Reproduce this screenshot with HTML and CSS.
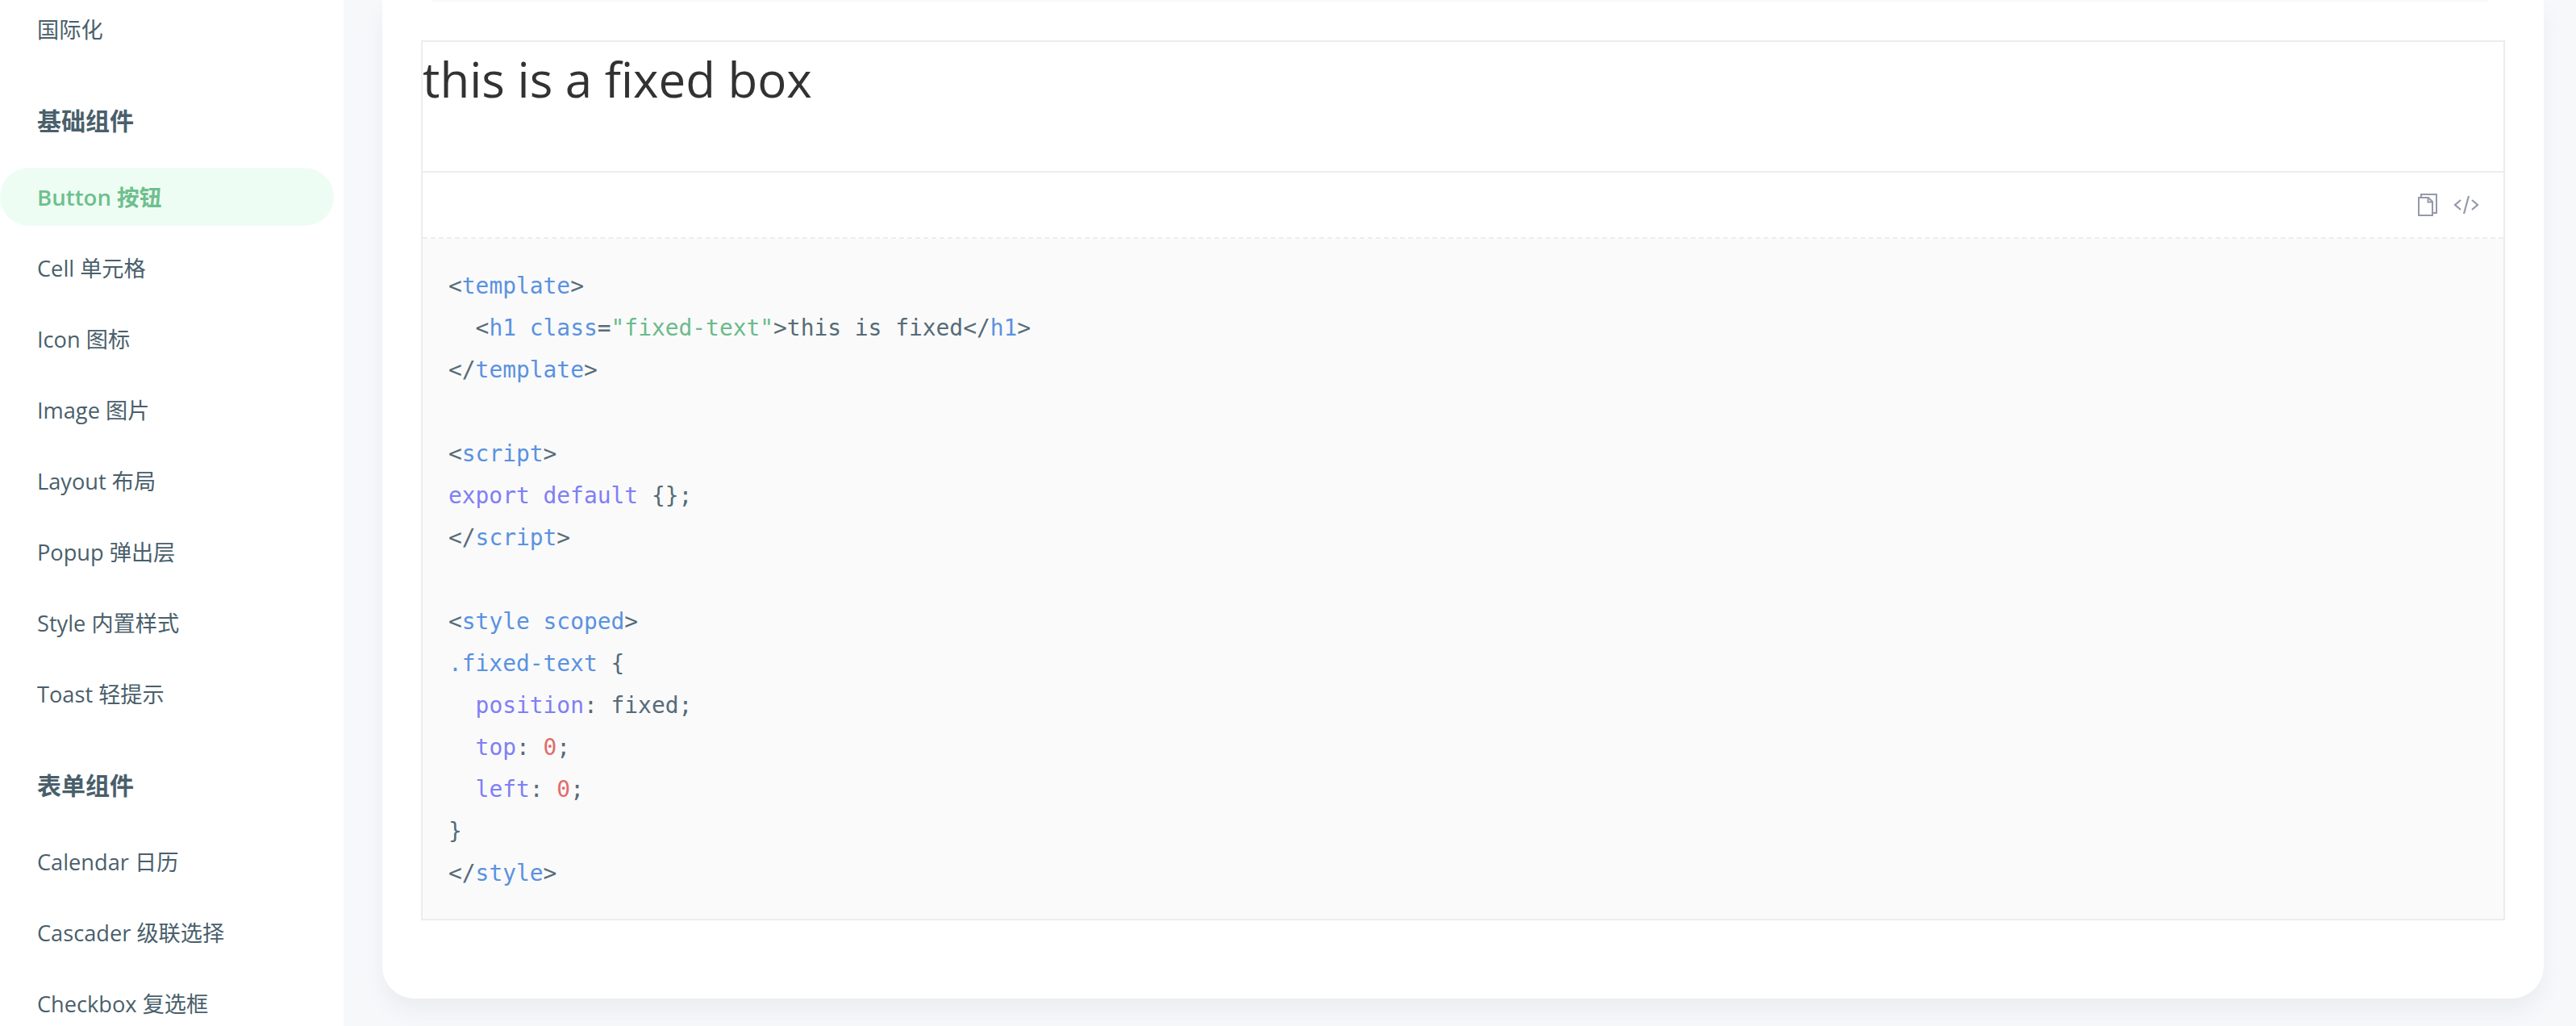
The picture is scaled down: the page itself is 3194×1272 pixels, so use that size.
FILE: index.html
```
<!DOCTYPE html>
<html lang="zh">
<head>
<meta charset="utf-8">
<title>Button 按钮</title>
<link rel="stylesheet" href="styles.css">
</head>
<body>
<div class="page">
  <aside class="sidebar">
    <a class="nav-item">国际化</a>
    <div class="nav-title">基础组件</div>
    <a class="nav-item active">Button 按钮</a>
    <a class="nav-item">Cell 单元格</a>
    <a class="nav-item">Icon 图标</a>
    <a class="nav-item">Image 图片</a>
    <a class="nav-item">Layout 布局</a>
    <a class="nav-item">Popup 弹出层</a>
    <a class="nav-item">Style 内置样式</a>
    <a class="nav-item">Toast 轻提示</a>
    <div class="nav-title">表单组件</div>
    <a class="nav-item">Calendar 日历</a>
    <a class="nav-item">Cascader 级联选择</a>
    <a class="nav-item">Checkbox 复选框</a>
  </aside>
  <main class="main">
    <section class="card">
      <div class="top-rule"></div>
      <div class="demo-block">
        <div class="demo-preview"><h1 class="demo-heading">this is a fixed box</h1></div>
        <div class="demo-toolbar">
          <svg class="icon-copy" width="24" height="28" viewBox="0 0 24 28" fill="none" stroke="#9599a8" stroke-width="2">
            <path d="M4 4V1H23V24H18"/>
            <path d="M1 5H13L18 10V27H1Z" fill="#fff"/>
            <path d="M12.5 5V10.500H18" />
          </svg>
          <svg class="icon-code" width="32" height="24" viewBox="0 0 32 24" fill="none" stroke="#9599a8" stroke-width="2.200">
            <path d="M9 6L2 12L9 18"/>
            <path d="M23 6L30 12L23 18"/>
            <path d="M19 1L13 23"/>
          </svg>
        </div>
        <pre class="code"><span class="p">&lt;</span><span class="t">template</span><span class="p">&gt;</span>
  <span class="p">&lt;</span><span class="t">h1</span> <span class="t">class</span><span class="p">=</span><span class="s">"fixed-text"</span><span class="p">&gt;this is fixed&lt;/</span><span class="t">h1</span><span class="p">&gt;</span>
<span class="p">&lt;/</span><span class="t">template</span><span class="p">&gt;</span>

<span class="p">&lt;</span><span class="t">script</span><span class="p">&gt;</span>
<span class="k">export default</span> <span class="p">{};</span>
<span class="p">&lt;/</span><span class="t">script</span><span class="p">&gt;</span>

<span class="p">&lt;</span><span class="t">style scoped</span><span class="p">&gt;</span>
<span class="t">.fixed-text</span> <span class="p">{</span>
  <span class="k">position</span><span class="p">: fixed;</span>
  <span class="k">top</span><span class="p">: </span><span class="n">0</span><span class="p">;</span>
  <span class="k">left</span><span class="p">: </span><span class="n">0</span><span class="p">;</span>
<span class="p">}</span>
<span class="p">&lt;/</span><span class="t">style</span><span class="p">&gt;</span></pre>
      </div>
    </section>
  </main>
</div>
</body>
</html>
```

FILE: styles.css
```
html, body {
  margin: 0;
  padding: 0;
  height: 100%;
  overflow: hidden;
  background: #f7f8fa;
}

.page {
  display: flex;
  height: 1272px;
  overflow: hidden;
  font-family: "Open Sans", "Noto Sans CJK SC", sans-serif;
}

.sidebar {
  flex: 0 0 426px;
  box-sizing: border-box;
  height: 1272px;
  padding-right: 12px;
  overflow: hidden;
  background: #fff;
  display: flex;
  flex-direction: column;
  gap: 16px;
}

.nav-item {
  flex: 0 0 72px;
  display: flex;
  align-items: center;
  padding-left: 46px;
  padding-bottom: 2px;
  box-sizing: border-box;
  border-radius: 36px;
  font-size: 27.2px;
  color: #4a5f6b;
}

.nav-item.active {
  background: #eefdf3;
  color: #6fbf8e;
  font-size: 27.6px;
  font-weight: 600;
}

.nav-title {
  flex: 0 0 56px;
  display: flex;
  align-items: center;
  margin: 33px 0 15px;
  padding-left: 46px;
  padding-bottom: 2px;
  box-sizing: border-box;
  font-size: 30px;
  font-weight: 600;
  color: #4a5f6b;
}

.main {
  flex: 1;
  box-sizing: border-box;
  padding: 0 40px 0 48px;
}

.card {
  box-sizing: border-box;
  height: 1238px;
  padding: 0 48px;
  background: #fff;
  border-radius: 0 0 40px 40px;
  box-shadow: 0 16px 24px #ebedf0;
}

.top-rule {
  height: 2px;
  margin: 0 22px 0 14px;
  background: #f7f8fa;
  border-radius: 2px;
}

.demo-block {
  margin-top: 48px;
  border: 2px solid #ebedf0;
}

.demo-preview {
  height: 160px;
  border-bottom: 2px solid #ebedf0;
}

.demo-heading {
  margin: 0;
  padding-top: 2px;
  font-size: 60px;
  font-weight: 400;
  line-height: 88px;
  color: #323233;
}

.demo-toolbar {
  display: flex;
  align-items: center;
  justify-content: flex-end;
  gap: 20px;
  height: 80px;
  padding-right: 30px;
  border-bottom: 2px dashed #ebedf0;
}

.icon-copy,
.icon-code {
  display: block;
}

.code {
  margin: 0;
  padding: 33px 32px 30px;
  background: #fafafa;
  font-family: "DejaVu Sans Mono", monospace;
  font-size: 27.9px;
  line-height: 52px;
}

.p { color: #566b78; }
.t { color: #5a92e0; }
.s { color: #6abb8c; }
.k { color: #7f7ff5; }
.n { color: #df6c6c; }
```
